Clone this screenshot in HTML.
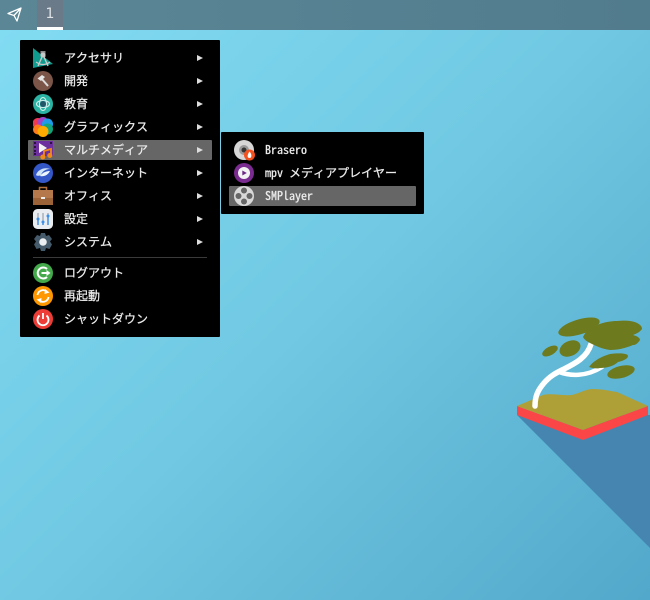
<!DOCTYPE html>
<html><head><meta charset="utf-8">
<style>
html,body{margin:0;padding:0;width:650px;height:600px;overflow:hidden}
body{position:relative;background:linear-gradient(135deg,#82dcf2 0%,#70c8e2 50%,#52a8ca 100%);font-family:"Noto Sans Mono CJK JP","DejaVu Sans Mono","Noto Sans CJK JP",monospace;font-size:12px;color:#ececec}
.bar{position:absolute;left:0;top:0;width:650px;height:30px;background:linear-gradient(90deg,#5a8695,#517c8e)}
.tab{position:absolute;left:37px;top:0;width:26px;height:27px;background:#6b7a88;border-bottom:3px solid #fff;color:#dfe3e6;font:14px/28px "DejaVu Sans",sans-serif;text-align:center}
.menu{position:absolute;background:#000;border-radius:1px}
.t{position:absolute;white-space:nowrap;line-height:14px;height:14px;-webkit-text-stroke:.25px #ececec}
.a{position:absolute;left:197px;width:0;height:0;border-left:6px solid #ddd;border-top:3px solid transparent;border-bottom:3px solid transparent}
.sel{position:absolute;background:#666;border-radius:1px}
svg{position:absolute}
</style></head><body>
<svg style="left:0;top:0" width="650" height="600" viewBox="0 0 650 600">
<polygon points="517,415 650,415 650,548" fill="#4585af"/>
<polygon points="517,406 583,430 648,406 648,415 583,440 517,415" fill="#fb4648"/>
<path d="M517 406 L543 395 C552 393 563 396 572 395 C580 393 586 389 593 389 C602 389 610 391 617 392 L648 406 L583 430 Z" fill="#aea036"/>
<g fill="none" stroke="#fff" stroke-linecap="round">
<path d="M535 406 C535 396 538 390 544 383 C550 376 556 373 562 370 C574 364 587 358 591 344" stroke-width="5.500"/>
<path d="M559 372 C570 376 586 377 602 367" stroke-width="4.500"/>
</g>
<g fill="#6d7a1e">
<path d="M583 337 C586 331 590 327 597 325 C604 322 612 321 617 321 C626 320 633 321 637 323 C641 325 642 327 642 329 C640 332 636 334 633 335 C637 336 640 338 640 340 C638 343 636 345 633 345 C626 348 618 350 610 350 C602 349 596 346 590 343 C586 341 584 339 583 337Z"/>
<ellipse cx="579" cy="327" rx="21.500" ry="7.500" transform="rotate(-17 579 327)"/>
<ellipse cx="570" cy="348.500" rx="11" ry="7.500" transform="rotate(-25 570 348.500)"/>
<ellipse cx="550" cy="351" rx="8.500" ry="4.200" transform="rotate(-28 550 351)"/>
<path d="M589 367 C594 360 603 356 610 354 C618 353 628 353 628 356 C628 359 622 361 618 362 C614 366 607 368 600 368 C596 369 592 368 589 367Z"/>
<ellipse cx="621" cy="372" rx="14" ry="6" transform="rotate(-14 621 372)"/>
</g>
</svg>

<div class="bar"></div>
<svg style="left:6px;top:6px" width="18" height="18" viewBox="0 0 18 18"><path d="M2 7.500 L15 2 L11 15 L8 9.500 Z M8 9.500 L15 2" fill="none" stroke="#fff" stroke-width="1.300" stroke-linejoin="round"/></svg>
<div class="tab">1</div>

<div class="menu" style="left:20px;top:40px;width:200px;height:297px"></div>
<div class="sel" style="left:28px;top:140px;width:184px;height:20px"></div>

<!-- Icons main menu -->
<svg style="left:33px;top:48px" width="20" height="20" viewBox="0 0 20 20"><polygon points="0,0 20,16 0,20" fill="#0f9c8f"/><rect x="7.500" y="3" width="5" height="6" fill="#8a8a8a"/><circle cx="10" cy="7" r="2.500" fill="#c8c8c8"/><path d="M9 9 L5 18 M11 9 L15 18" stroke="#c8c8c8" stroke-width="1.400"/><path d="M3 14 Q10 19 17 14" stroke="#c8c8c8" stroke-width="1.200" fill="none"/></svg>
<svg style="left:33px;top:71px" width="20" height="20" viewBox="0 0 20 20"><circle cx="10" cy="10" r="10" fill="#7b5548"/><path d="M8 7 L15 15" stroke="#ddd" stroke-width="2"/><path d="M4.500 7.500 L9 4 L12 6 L8 10 Z" fill="#e6e6e6"/></svg>
<svg style="left:33px;top:94px" width="20" height="20" viewBox="0 0 20 20"><circle cx="10" cy="10" r="10" fill="#2bb3a3"/><ellipse cx="10" cy="10" rx="6.500" ry="3.500" fill="none" stroke="#cfeeea" stroke-width="1.100"/><ellipse cx="10" cy="10" rx="3.500" ry="6.500" fill="none" stroke="#cfeeea" stroke-width="1.100"/><circle cx="10" cy="10" r="3" fill="#24566a"/></svg>
<svg style="left:33px;top:117px" width="20" height="20" viewBox="0 0 20 20"><circle cx="5" cy="6.500" r="5.500" fill="#f0384f"/><circle cx="10" cy="5.500" r="5.500" fill="#a142c9"/><circle cx="14.500" cy="7" r="5.500" fill="#1e9be8"/><circle cx="14.500" cy="12" r="5.500" fill="#10a37c"/><circle cx="5" cy="12.500" r="5" fill="#ff7a1a"/><circle cx="10" cy="14.500" r="5.500" fill="#ffac00"/></svg>
<svg style="left:33px;top:140px" width="22" height="20" viewBox="0 0 22 20"><rect x="0" y="1" width="20" height="15" fill="#6d2f9e"/><g fill="#2b1040"><rect x="1" y="2" width="2" height="2"/><rect x="1" y="6" width="2" height="2"/><rect x="1" y="10" width="2" height="2"/><rect x="1" y="13" width="2" height="2"/><rect x="17" y="2" width="2" height="2"/></g><polygon points="6,3 6,13 14,8" fill="#f3f3f3"/><path d="M11 17 V11 L18 9 V15" stroke="#f28a17" stroke-width="1.800" fill="none"/><circle cx="9.800" cy="17" r="2.500" fill="#f28a17"/><circle cx="16.800" cy="15.500" r="2.500" fill="#f28a17"/></svg>
<svg style="left:33px;top:163px" width="20" height="20" viewBox="0 0 20 20"><circle cx="10" cy="10" r="10" fill="#3457c8"/><path d="M3 12 C5 6 12 4 17 6 C12 6 9 9 8 12 C6 13 4 13 3 12Z" fill="#cfe3f7"/><path d="M7 13 C10 9 14 8 17 8 C15 12 11 14 7 13Z" fill="#eef6fd"/></svg>
<svg style="left:33px;top:186px" width="20" height="20" viewBox="0 0 20 20"><path d="M6.500 4 V1.500 H13.500 V4" fill="none" stroke="#b5703a" stroke-width="1.500"/><rect x="0" y="4" width="20" height="9" fill="#b5784a"/><rect x="0" y="12" width="20" height="7" fill="#9c6339"/><rect x="8" y="11" width="4" height="2" fill="#eee"/></svg>
<svg style="left:33px;top:209px" width="20" height="20" viewBox="0 0 20 20"><rect width="20" height="20" rx="4.500" fill="#e9ecf0"/><path d="M5 4 V16 M10 4 V16 M15 4 V16" stroke="#9aa2ac" stroke-width="1.200"/><path d="M5 11 V16 M10 13 V16 M15 8 V16" stroke="#3c90e8" stroke-width="1.400"/><circle cx="5" cy="10" r="1.500" fill="#3c90e8"/><circle cx="10" cy="13" r="1.500" fill="#3c90e8"/><circle cx="15" cy="7" r="1.500" fill="#3c90e8"/></svg>
<svg style="left:33px;top:232px" width="20" height="20" viewBox="0 0 20 20"><path d="M8 1 H12 L13 4 L16 3 L19 7 L17 9.500 L19 12.500 L16.500 17 L13 16 L12 19 H8 L7 16 L3.500 17 L1 12.500 L3 9.500 L1 7 L4 3 L7 4 Z" fill="#455a6a"/><circle cx="10" cy="10" r="3.800" fill="#eceff1"/></svg>

<svg style="left:33px;top:263px" width="20" height="20" viewBox="0 0 20 20"><circle cx="10" cy="10" r="10" fill="#43a94b"/><path d="M14 6 A5.500 5.500 0 1 0 14 14" fill="none" stroke="#fff" stroke-width="2"/><path d="M8.500 10 H15" stroke="#fff" stroke-width="2"/><polygon points="13.500,7 17.500,10 13.500,13" fill="#fff"/></svg>
<svg style="left:33px;top:286px" width="20" height="20" viewBox="0 0 20 20"><circle cx="10" cy="10" r="10" fill="#ff9800"/><path d="M4.500 9 A5.500 5.500 0 0 1 13.500 5.500" fill="none" stroke="#fff" stroke-width="1.800"/><polygon points="12,3 16.500,6.500 11.500,8" fill="#fff"/><path d="M15.500 11 A5.500 5.500 0 0 1 6.500 14.500" fill="none" stroke="#fff" stroke-width="1.800"/><polygon points="8,17 3.500,13.500 8.500,12" fill="#fff"/></svg>
<svg style="left:33px;top:309px" width="20" height="20" viewBox="0 0 20 20"><circle cx="10" cy="10" r="10" fill="#ee3d36"/><path d="M6.500 6.500 A5.500 5.500 0 1 0 13.500 6.500" fill="none" stroke="#fff" stroke-width="1.800"/><path d="M10 4 V10" stroke="#fff" stroke-width="1.800"/></svg>

<div class="t" style="left:64px;top:51px">アクセサリ</div><div class="a" style="top:55px"></div>
<div class="t" style="left:64px;top:74px">開発</div><div class="a" style="top:78px"></div>
<div class="t" style="left:64px;top:97px">教育</div><div class="a" style="top:101px"></div>
<div class="t" style="left:64px;top:120px">グラフィックス</div><div class="a" style="top:124px"></div>
<div class="t" style="left:64px;top:143px">マルチメディア</div><div class="a" style="top:147px"></div>
<div class="t" style="left:64px;top:166px">インターネット</div><div class="a" style="top:170px"></div>
<div class="t" style="left:64px;top:189px">オフィス</div><div class="a" style="top:193px"></div>
<div class="t" style="left:64px;top:212px">設定</div><div class="a" style="top:216px"></div>
<div class="t" style="left:64px;top:235px">システム</div><div class="a" style="top:239px"></div>
<div style="position:absolute;left:33px;top:257px;width:174px;height:1px;background:#3a3a3a"></div>
<div class="t" style="left:64px;top:266px">ログアウト</div>
<div class="t" style="left:64px;top:289px">再起動</div>
<div class="t" style="left:64px;top:312px">シャットダウン</div>

<div class="menu" style="left:221px;top:132px;width:203px;height:82px"></div>
<div class="sel" style="left:229px;top:186px;width:187px;height:20px"></div>
<svg style="left:234px;top:140px" width="22" height="22" viewBox="0 0 22 22"><circle cx="10" cy="10" r="10" fill="#d6d6d6"/><circle cx="10" cy="10" r="5" fill="#999"/><circle cx="10" cy="10" r="2.500" fill="#333"/><circle cx="15.500" cy="15" r="5.500" fill="#f4511e"/><path d="M15.500 11.500 C18 14 18 18 15.500 18 C13 18 13 15 15.500 11.500Z" fill="#fff"/></svg>
<svg style="left:234px;top:163px" width="20" height="20" viewBox="0 0 20 20"><circle cx="10" cy="10" r="10" fill="#7a2b8f"/><circle cx="10" cy="10" r="6" fill="#f2f2f2"/><polygon points="8.300,7.500 8.300,12.500 12.800,10" fill="#6d2a85"/></svg>
<svg style="left:234px;top:186px" width="20" height="20" viewBox="0 0 20 20"><circle cx="10" cy="10" r="10" fill="#d8d8d8"/><g fill="#666"><circle cx="10" cy="4.500" r="3"/><circle cx="10" cy="15.500" r="3"/><circle cx="4.500" cy="10" r="3"/><circle cx="15.500" cy="10" r="3"/></g></svg>
<div class="t" style="left:265px;top:143px">Brasero</div>
<div class="t" style="left:265px;top:166px">mpv メディアプレイヤー</div>
<div class="t" style="left:265px;top:189px">SMPlayer</div>
</body></html>
